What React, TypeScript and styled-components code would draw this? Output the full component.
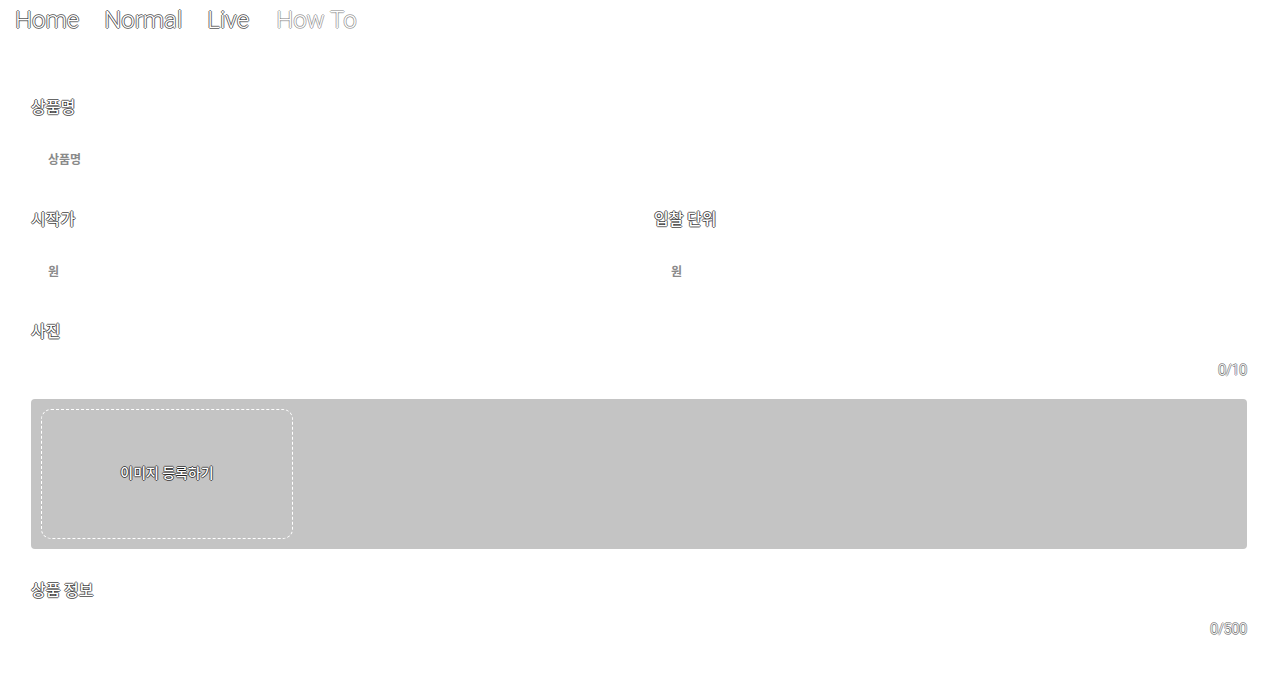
import React from "react";
import styled, { createGlobalStyle, css } from "styled-components";

const GlobalStyle = createGlobalStyle`
  html, body { margin: 0; padding: 0; background: #fff; }
  body { font-family: "Noto Sans CJK KR", "Noto Sans", Roboto, sans-serif; overflow: hidden; }
  * { box-sizing: border-box; }
`;

const outline = (c: string) => css`
  color: #fff;
  text-shadow: -1px 0 0 ${c}, 1px 0 0 ${c}, 0 -1px 0 ${c}, 0 1px 0 ${c};
`;

const Nav = styled.nav`
  display: flex;
  align-items: center;
  gap: 25px;
  height: 40px;
  padding: 0 15px;
`;

const NavLink = styled.a<{ $muted?: boolean }>`
  font-family: Roboto, "Noto Sans", sans-serif;
  font-size: 24px;
  font-weight: 300;
  line-height: 40px;
  text-decoration: none;
  cursor: pointer;
  &:last-child { margin-left: 2px; }
  ${(p) => outline(p.$muted ? "rgba(0,0,0,0.3)" : "rgba(0,0,0,0.55)")}
`;

const Form = styled.form`
  padding: 54px 27px 0 31px;
  display: flex;
  flex-direction: column;
`;

const Label = styled.label`
  display: block;
  font-size: 16px;
  font-weight: 500;
  line-height: 24px;
  margin: 0 0 20px;
  ${outline("rgba(0,0,0,0.6)")}
`;

const Section = styled.div`
  margin-bottom: 28px;
`;

const Row = styled.div`
  display: grid;
  grid-template-columns: 623px 1fr;
`;

const Input = styled.input`
  display: block;
  width: 402px;
  height: 40px;
  padding: 0 16px;
  border: 1px solid #fff;
  border-radius: 4px;
  background: #fff;
  font-family: "Noto Sans CJK KR", sans-serif;
  font-size: 12px;
  font-weight: 700;
  color: #333;
  outline: none;
  &::placeholder { color: #8a8a8a; }
`;

const Counter = styled.div`
  margin: 0 0 21px;
  font-family: Roboto, sans-serif;
  font-size: 14px;
  font-weight: 300;
  line-height: 16px;
  text-align: right;
  ${outline("rgba(0,0,0,0.45)")}
`;

const UploadArea = styled.div`
  height: 150px;
  padding: 10px;
  background: #c4c4c4;
  border-radius: 4px;
  display: flex;
  gap: 10px;
`;

const UploadButton = styled.button`
  width: 252px;
  height: 130px;
  border: 1px dashed #fff;
  border-radius: 10px;
  background: transparent;
  display: flex;
  align-items: center;
  justify-content: center;
  padding: 0 0 4px;
  font-family: "Noto Sans CJK KR", sans-serif;
  font-size: 14px;
  font-weight: 500;
  cursor: pointer;
  ${outline("rgba(0,0,0,0.6)")}
`;

const TextArea = styled.textarea`
  display: block;
  width: 100%;
  height: 160px;
  padding: 12px 16px;
  border: 1px solid #fff;
  border-radius: 4px;
  resize: none;
  outline: none;
  font-family: "Noto Sans CJK KR", sans-serif;
  font-size: 12px;
`;

export default function App() {
  return (
    <>
      <GlobalStyle />
      <Nav>
        <NavLink>Home</NavLink>
        <NavLink>Normal</NavLink>
        <NavLink>Live</NavLink>
        <NavLink $muted>How To</NavLink>
      </Nav>
      <Form onSubmit={(e) => e.preventDefault()}>
        <Section>
          <Label>상품명</Label>
          <Input placeholder="상품명" />
        </Section>
        <Row>
          <Section>
            <Label>시작가</Label>
            <Input placeholder="원" />
          </Section>
          <Section>
            <Label>입찰 단위</Label>
            <Input placeholder="원" />
          </Section>
        </Row>
        <Section>
          <Label>사진</Label>
          <Counter>0/10</Counter>
          <UploadArea>
            <UploadButton type="button">이미지 등록하기</UploadButton>
          </UploadArea>
        </Section>
        <Section>
          <Label>상품 정보</Label>
          <Counter>0/500</Counter>
          <TextArea />
        </Section>
      </Form>
    </>
  );
}
